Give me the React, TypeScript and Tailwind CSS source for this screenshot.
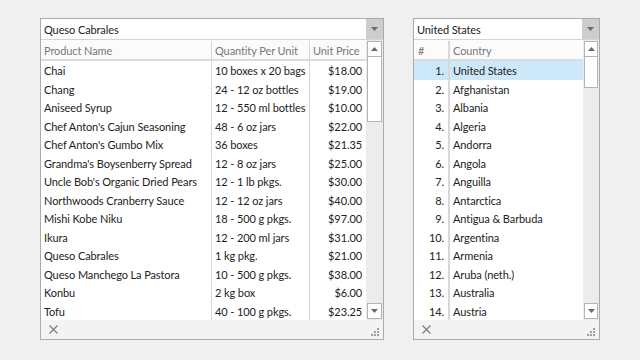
import React from "react";

const products: [string, string, string][] = [
  ["Chai", "10 boxes x 20 bags", "$18.00"],
  ["Chang", "24 - 12 oz bottles", "$19.00"],
  ["Aniseed Syrup", "12 - 550 ml bottles", "$10.00"],
  ["Chef Anton's Cajun Seasoning", "48 - 6 oz jars", "$22.00"],
  ["Chef Anton's Gumbo Mix", "36 boxes", "$21.35"],
  ["Grandma's Boysenberry Spread", "12 - 8 oz jars", "$25.00"],
  ["Uncle Bob's Organic Dried Pears", "12 - 1 lb pkgs.", "$30.00"],
  ["Northwoods Cranberry Sauce", "12 - 12 oz jars", "$40.00"],
  ["Mishi Kobe Niku", "18 - 500 g pkgs.", "$97.00"],
  ["Ikura", "12 - 200 ml jars", "$31.00"],
  ["Queso Cabrales", "1 kg pkg.", "$21.00"],
  ["Queso Manchego La Pastora", "10 - 500 g pkgs.", "$38.00"],
  ["Konbu", "2 kg box", "$6.00"],
  ["Tofu", "40 - 100 g pkgs.", "$23.25"],
];

const countries = [
  "United States",
  "Afghanistan",
  "Albania",
  "Algeria",
  "Andorra",
  "Angola",
  "Anguilla",
  "Antarctica",
  "Antigua & Barbuda",
  "Argentina",
  "Armenia",
  "Aruba (neth.)",
  "Australia",
  "Austria",
];

function DownTri() {
  return (
    <svg width="7" height="4" viewBox="0 0 7 4">
      <path d="M0 0 H7 L3.5 4 Z" fill="#6a6a6a" />
    </svg>
  );
}
function UpTri() {
  return (
    <svg width="7" height="4" viewBox="0 0 7 4">
      <path d="M0 4 H7 L3.5 0 Z" fill="#6a6a6a" />
    </svg>
  );
}

function Grip() {
  const dots = [
    [6, 0],
    [3, 3],
    [6, 3],
    [0, 6],
    [3, 6],
    [6, 6],
  ];
  return (
    <svg width="8" height="8" viewBox="0 0 8 8">
      {dots.map(([x, y], i) => (
        <rect key={i} x={x} y={y} width="2" height="2" fill="#a0a0a0" />
      ))}
    </svg>
  );
}

function XIcon() {
  return (
    <svg width="9" height="9" viewBox="0 0 9 9">
      <path d="M0.5 0.5 L8.5 8.5 M8.5 0.5 L0.5 8.5" stroke="#7a7a7a" strokeWidth="1.1" />
    </svg>
  );
}

function ComboHeader({ text }: { text: string }) {
  return (
    <div className="flex h-[21px] border-b border-[#d4d4d4] bg-white">
      <div className="flex-1 pl-[3px] pt-[1px] leading-[20px] text-[#222]">{text}</div>
      <div className="flex h-[20px] w-[17px] items-center justify-center bg-[#cdcdcd]">
        <DownTri />
      </div>
    </div>
  );
}

function ScrollBar({ thumbH }: { thumbH: number }) {
  return (
    <div className="flex w-[17px] flex-col bg-[#ececec] px-[1px] pt-[1px] pb-[1px]">
      <div className="flex h-[16px] items-center justify-center border border-[#b4b4b4] bg-white">
        <UpTri />
      </div>
      <div className="border-x border-b border-[#b4b4b4] bg-white" style={{ height: thumbH }} />
      <div className="flex-1" />
      <div className="flex h-[16px] items-center justify-center border border-[#b4b4b4] bg-white">
        <DownTri />
      </div>
    </div>
  );
}

function Footer() {
  return (
    <div className="flex h-[19px] items-center justify-between bg-[#f3f3f3] pl-[8px] pr-[4px]">
      <XIcon />
      <div className="self-end pb-[3px]">
        <Grip />
      </div>
    </div>
  );
}

export default function App() {
  return (
    <div
      className="flex h-[360px] w-[640px] items-start bg-[#f0f0f0] pl-[40px] pt-[18px] text-[11px] tracking-[-0.1px]"
      style={{ fontFamily: "'Segoe UI', Lato, 'Noto Sans', sans-serif" }}
    >
      <div className="flex w-[344px] flex-col border border-[#ababab] bg-white">
        <ComboHeader text="Queso Cabrales" />
        <div className="flex">
          <div className="flex flex-col">
            <div className="flex h-[21px] border-b-2 border-[#dcdcdc] bg-[#fbfbfb] pt-[1px] leading-[19px] text-[#777]">
              <div className="w-[171px] border-r border-[#d8d8d8] pl-[3px]">Product Name</div>
              <div className="w-[98px] border-r border-[#d8d8d8] pl-[3px]">Quantity Per Unit</div>
              <div className="w-[56px] pl-[3px]">Unit Price</div>
            </div>
            {products.map(([n, q, p], i) => (
              <div key={i} className="flex h-[18.5px] leading-[19.5px] text-[#222]">
                <div className="w-[171px] whitespace-nowrap border-r border-[#d8d8d8] pl-[3px]">{n}</div>
                <div className="w-[98px] whitespace-nowrap border-r border-[#d8d8d8] pl-[3px]">{q}</div>
                <div className="w-[56px] pr-[4px] text-right">{p}</div>
              </div>
            ))}
          </div>
          <ScrollBar thumbH={65} />
        </div>
        <Footer />
      </div>

      <div className="ml-[29px] flex w-[187px] flex-col border border-[#ababab] bg-white">
        <ComboHeader text="United States" />
        <div className="flex">
          <div className="flex flex-col">
            <div className="flex h-[21px] border-b-2 border-[#dcdcdc] bg-[#fbfbfb] pt-[1px] leading-[19px] text-[#777]">
              <div className="w-[36px] border-r-2 border-[#d8d8d8] pl-[4px]">#</div>
              <div className="w-[133px] pl-[3px]">Country</div>
            </div>
            {countries.map((c, i) => (
              <div
                key={i}
                className={
                  "flex h-[18.5px] leading-[19.5px] text-[#222] " +
                  (i === 0 ? "bg-[#cde8f8]" : "")
                }
              >
                <div className="w-[36px] border-r-2 border-[#d8d8d8] pr-[4px] text-right">{i + 1}.</div>
                <div className="w-[133px] whitespace-nowrap pl-[3px]">{c}</div>
              </div>
            ))}
          </div>
          <ScrollBar thumbH={31} />
        </div>
        <Footer />
      </div>
    </div>
  );
}
